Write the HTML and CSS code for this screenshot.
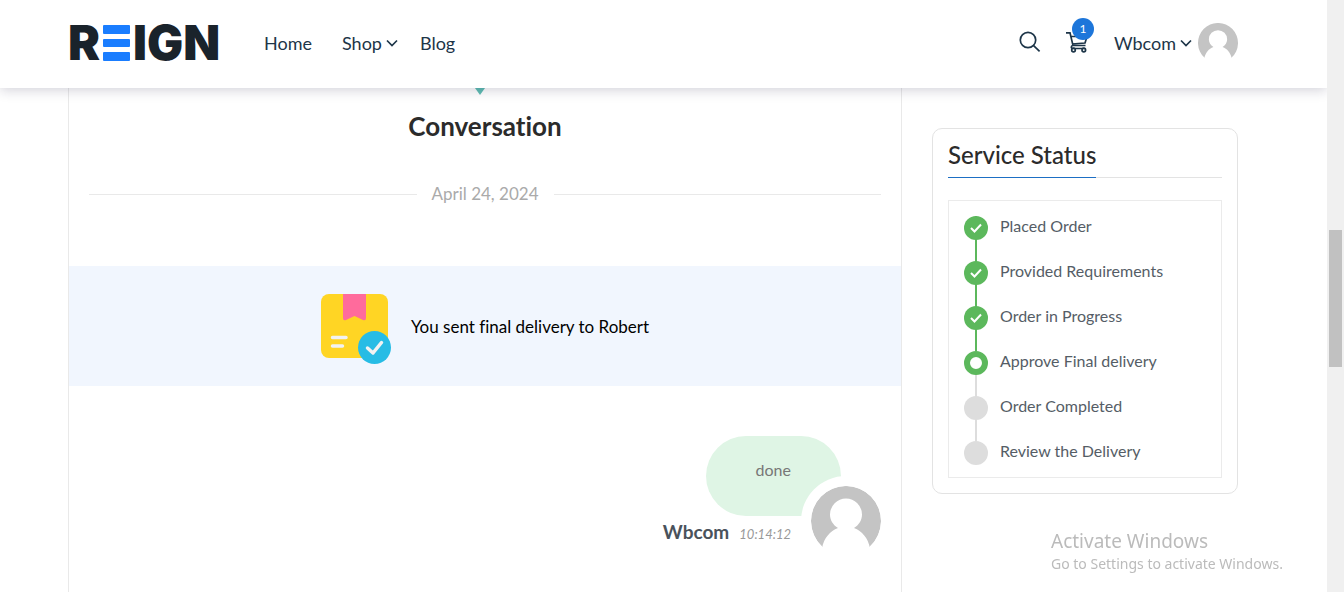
FILE: index.html
```html
<!DOCTYPE html>
<html lang="en">
<head>
<meta charset="UTF-8">
<meta name="viewport" content="width=device-width, initial-scale=1">
<title>Reign - Service Order</title>
<link rel="stylesheet" href="styles.css">
</head>
<body>

<div class="page">
  <header class="site-header">
    <a class="logo" href="#" aria-label="Reign">
      <span>R</span>
      <svg width="27" height="36" viewBox="0 0 27 36">
        <rect width="27" height="9" rx="1"/>
        <rect y="14" width="27" height="8" rx="1"/>
        <rect y="27" width="27" height="9" rx="1"/>
      </svg>
      <span>IGN</span>
    </a>

    <nav class="main-nav">
      <a href="#">Home</a>
      <a href="#" class="has-menu">Shop
        <svg width="12" height="8" viewBox="0 0 12 8"><path d="M1 1.5l5 5 5-5"/></svg>
      </a>
      <a href="#">Blog</a>
    </nav>

    <div class="header-tools">
      <button class="icon-btn" aria-label="Search">
        <svg width="22" height="22" viewBox="0 0 22 22"><circle cx="9" cy="9" r="7.7"/><path d="M14.6 14.6l6 5.8"/></svg>
      </button>
      <a class="cart" href="#" aria-label="Cart">
        <svg width="24" height="22" viewBox="0 0 24 22"><path d="M1 1.8h4l3 12.7h12.5M6 5.5h16l-2 6.5-13 1M8 14.5c-2 0-2.500 3 0 3h12"/><circle cx="8.5" cy="19" r="1.8"/><circle cx="18.8" cy="19" r="1.8"/></svg>
        <span class="badge">1</span>
      </a>
      <a class="user has-menu" href="#">Wbcom
        <svg width="12" height="8" viewBox="0 0 12 8"><path d="M1 1.5l5 5 5-5"/></svg>
      </a>
      <svg class="avatar-small" viewBox="0 0 70 70">
        <path d="M11.600 61a35 35 0 1 1 46.800 0z" fill="#c4c4c4"/>
        <path d="M11 62C13 52 19 45 27 42c-5-3-8-8-8-13.500a16 16 0 0 1 32 0C51 34 48 39 43 42c8 3 14 10 16 20z" fill="#fff"/>
      </svg>
    </div>
  </header>

  <div class="content">
    <main class="order">
      <div class="pointer"></div>
      <h2>Conversation</h2>
      <div class="date-line">April 24, 2024</div>

      <div class="notice">
        <svg width="70" height="70" viewBox="0 0 70 70">
          <rect width="67" height="64" rx="8" fill="#ffd524"/>
          <path d="M22 0h23v24q0 3-3 2l-8.500-4-8.500 4q-3 1-3-2z" fill="#ff6b9c"/>
          <path d="M11.500 43.500h13.500M11.500 52h10" stroke="#f2f2f2" stroke-width="3.500" stroke-linecap="round"/>
          <circle cx="53.500" cy="53.500" r="16.500" fill="#27bce5"/>
          <path d="M46.500 54l5.500 5 8.500-10.500" fill="none" stroke="#f2f2f2" stroke-width="3.500" stroke-linecap="round" stroke-linejoin="round"/>
        </svg>
        <p>You sent final delivery to Robert</p>
      </div>

      <div class="message">
        <div class="message-body">
          <div class="bubble">done</div>
          <div class="meta"><strong>Wbcom</strong><time>10:14:12</time></div>
        </div>
        <svg class="avatar" viewBox="0 0 70 70">
          <path d="M11.600 61a35 35 0 1 1 46.800 0z" fill="#c4c4c4"/>
          <path d="M11 62C13 52 19 45 27 42c-5-3-8-8-8-13.500a16 16 0 0 1 32 0C51 34 48 39 43 42c8 3 14 10 16 20z" fill="#fff"/>
        </svg>
      </div>
    </main>

    <aside class="status-card">
      <h3><span>Service Status</span></h3>
      <ol class="steps">
        <li class="done"><i><svg width="12" height="10" viewBox="0 0 12 10"><path d="M1 5l3.500 3.500L11 1.500"/></svg></i>Placed Order</li>
        <li class="done"><i><svg width="12" height="10" viewBox="0 0 12 10"><path d="M1 5l3.500 3.500L11 1.500"/></svg></i>Provided Requirements</li>
        <li class="done"><i><svg width="12" height="10" viewBox="0 0 12 10"><path d="M1 5l3.500 3.500L11 1.500"/></svg></i>Order in Progress</li>
        <li class="current"><i></i>Approve Final delivery</li>
        <li><i></i>Order Completed</li>
        <li><i></i>Review the Delivery</li>
      </ol>
    </aside>
  </div>
</div>

<div class="scrollbar"><div class="thumb"></div></div>

<div class="watermark">
  <p class="big">Activate Windows</p>
  <p>Go to Settings to activate Windows.</p>
</div>

</body>
</html>
```
FILE: styles.css
```css
* {
  box-sizing: border-box;
}

body {
  margin: 0;
  display: flex;
  min-height: 100vh;
  font-family: Lato, "Liberation Sans", sans-serif;
  font-size: 16px;
  font-variant-ligatures: none;
  color: #555d66;
  background: #fff;
}

h2, h3, p, ol {
  margin: 0;
  padding: 0;
}

a {
  color: inherit;
  text-decoration: none;
}

.page {
  flex: 1;
  display: flex;
  flex-direction: column;
}

/* Header */
.site-header {
  display: flex;
  align-items: center;
  height: 88px;
  padding: 0 89px 2px 68px;
  font-size: 18px;
  color: #1d3548;
  background: #fff;
  box-shadow: 0 2px 12px rgba(25, 20, 60, 0.2);
  clip-path: inset(0 0 -20px 0);
  z-index: 1;
}

.site-header svg {
  fill: none;
  stroke: #1d3548;
  stroke-width: 1.7;
}

.logo {
  display: flex;
  align-items: center;
  gap: 3px;
  width: 150px;
  font: 900 48px/36px Inter, sans-serif;
  color: #1a232b;
}

.site-header .logo svg {
  fill: #1a7dff;
  stroke: none;
  flex: none;
}

.main-nav {
  display: flex;
  gap: 30px;
  margin-left: 46px;
}

.main-nav .has-menu {
  margin-right: -8px;
}

.has-menu {
  display: flex;
  align-items: center;
  gap: 4px;
}

.header-tools {
  display: flex;
  align-items: center;
  margin-left: auto;
}

.icon-btn {
  display: flex;
  padding: 0;
  border: 0;
  background: none;
  cursor: pointer;
}

.cart {
  position: relative;
  display: flex;
  margin: 0 25px 0 24px;
}

.icon-btn,
.cart {
  padding-bottom: 2px;
}

.badge {
  position: absolute;
  top: -13px;
  right: -5px;
  width: 22px;
  border-radius: 50%;
  font-size: 12px;
  line-height: 22px;
  text-align: center;
  color: #fff;
  background: #1d76da;
}

.header-tools .avatar-small {
  width: 40px;
  height: 40px;
  margin-left: 6px;
  stroke: none;
}

/* Columns */
.content {
  flex: 1;
  display: flex;
  gap: 30px;
  padding: 0 89px 0 68px;
}

.order {
  flex: 1;
  border: solid #e9e9e9;
  border-width: 0 1px;
}

.pointer {
  width: 10px;
  margin: 0 auto;
  border: 5px solid transparent;
  border-top: 7px solid #5fbdb3;
  border-bottom: 0;
  position: relative;
  right: 5px;
}

h2 {
  margin-top: 15px;
  font-size: 26px;
  line-height: 32px;
  text-align: center;
  color: #2b2b2b;
}

.date-line {
  display: flex;
  align-items: center;
  gap: 15px;
  margin: 40px 20px 60px;
  font-size: 17px;
  line-height: 24px;
  color: #aaa;
}

.date-line::before,
.date-line::after {
  content: "";
  flex: 1;
  height: 1px;
  background: #e9e9e9;
}

.notice {
  display: flex;
  align-items: center;
  justify-content: center;
  gap: 20px;
  height: 120px;
  font-size: 17px;
  color: #000;
  background: #f1f6fe;
}

.notice svg {
  margin-top: 6px;
}

/* Chat message */
.message {
  display: flex;
  justify-content: flex-end;
  margin: 50px 20px;
}

.message-body {
  display: flex;
  flex-direction: column;
  align-items: flex-end;
}

.bubble {
  height: 80px;
  padding: 21px 50px;
  border-radius: 40px;
  line-height: 26px;
  color: #777;
  background: #dff5e5;
}

.meta {
  display: flex;
  align-items: baseline;
  gap: 10px;
  margin: 4px 50px 0 0;
  line-height: 24px;
}

.meta strong {
  font-size: 19px;
  color: #4a525b;
}

.meta time {
  font-size: 13px;
  font-style: italic;
  color: #999;
}

.avatar {
  width: 70px;
  height: 70px;
  margin: 50px 0 0 -30px;
  border-radius: 50%;
  background: #fff;
  box-shadow: 0 0 0 10px #fff;
}

/* Service status */
.status-card {
  width: 306px;
  align-self: flex-start;
  margin-top: 40px;
  padding: 10px 15px 15px;
  border: 1px solid #e3e3e3;
  border-radius: 10px;
}

h3 {
  margin-bottom: 22px;
  font-size: 24px;
  font-weight: 500;
  line-height: 32px;
  color: #2b2b2b;
  box-shadow: inset 0 -1px #e3e3e3;
}

h3 span {
  display: inline-block;
  padding-bottom: 6px;
  border-bottom: 1px solid #1d6fc4;
}

.steps {
  padding: 15px 15px 12px;
  border: 1px solid #ebebeb;
  list-style: none;
}

.steps li {
  display: flex;
  gap: 12px;
  height: 45px;
  line-height: 20px;
  background: linear-gradient(#ddd, #ddd) 11px 0 / 2px 100% no-repeat;
}

.steps .done {
  background-image: linear-gradient(#5cb85c, #5cb85c);
}

.steps li:last-child {
  height: 24px;
  background: none;
}

.steps i {
  display: flex;
  align-items: center;
  justify-content: center;
  width: 24px;
  height: 24px;
  border-radius: 50%;
  background: #ddd;
}

.steps .done i {
  background: #5cb85c;
}

.steps .current i {
  border: 6px solid #5cb85c;
  background: #fff;
}

.steps svg {
  fill: none;
  stroke: #fff;
  stroke-width: 2;
}

/* Window scrollbar */
.scrollbar {
  width: 17px;
  padding: 230px 2px 0;
  background: #f0f0f0;
}

.thumb {
  height: 137px;
  background: #c1c1c1;
}

.watermark {
  position: fixed;
  right: 57px;
  bottom: 17px;
  width: 236px;
  font-family: "Noto Sans", sans-serif;
  font-size: 14px;
  line-height: 22px;
  color: #bbb;
}

.watermark .big {
  font-size: 19px;
  line-height: 24px;
}
```
